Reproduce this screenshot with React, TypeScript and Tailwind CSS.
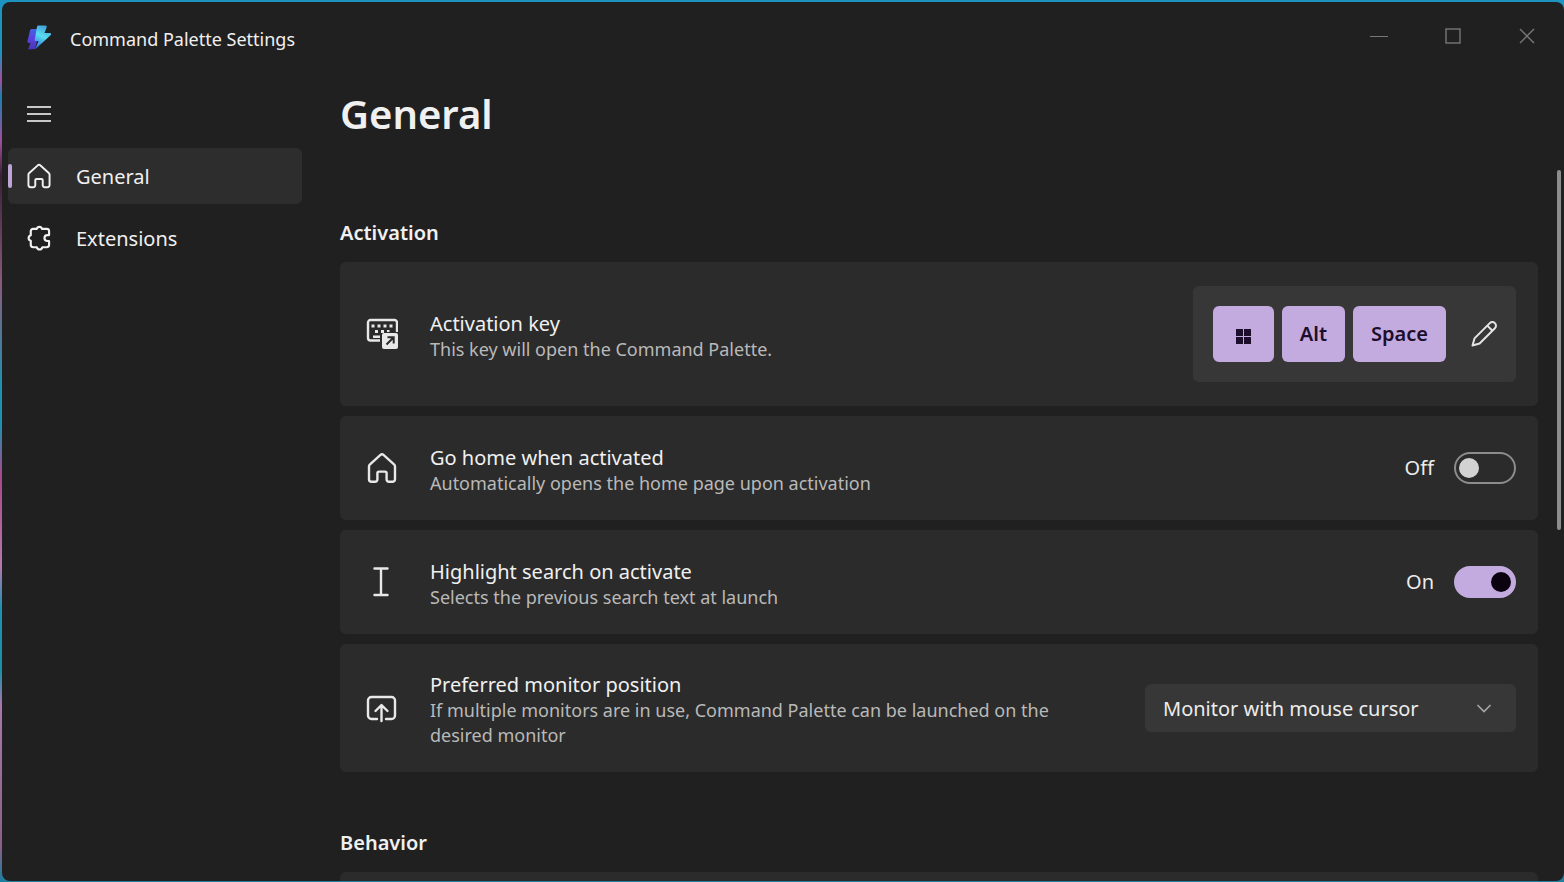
import React, { useState } from "react";

type IconProps = {
  className?: string;
};

const HomeIcon: React.FC<IconProps> = ({ className }) => (
  <svg className={className} viewBox="0 0 32 32" fill="none" stroke="currentColor" strokeWidth="2.4" strokeLinejoin="round">
    <path d="M14.5 2.9a2.3 2.3 0 0 1 3 0l10.5 9.4c.6.5 1 1.300 1 2.100v12.8a2.600 2.600 0 0 1-2.600 2.600h-3.500a2.300 2.300 0 0 1-2.300-2.300v-6.300a1.600 1.600 0 0 0-1.600-1.600h-6a1.600 1.600 0 0 0-1.600 1.600v6.300a2.300 2.300 0 0 1-2.300 2.300H5.600A2.600 2.600 0 0 1 3 27.200V14.400c0-.8.400-1.600 1-2.100z" />
  </svg>
);

const PuzzleIcon: React.FC<IconProps> = ({ className }) => (
  <svg className={className} viewBox="0 0 24 24" fill="none" stroke="currentColor" strokeWidth="2" strokeLinejoin="round">
    <path d="M10 3.6a2.4 2.4 0 0 1 4.7 0h4.400a2.200 2.200 0 0 1 2.200 2.200v3.500h-1.500a2.750 2.750 0 0 0 0 5.500h1.500v3.500a2.200 2.200 0 0 1-2.200 2.200h-4a2.600 2.600 0 0 1-5.100 0H6.600a2.200 2.200 0 0 1-2.200-2.200v-3.700a2.700 2.700 0 0 1 0-5.200V5.800a2.200 2.200 0 0 1 2.200-2.200z" />
  </svg>
);

const KeyboardIcon: React.FC<IconProps> = ({ className }) => (
  <svg className={className} viewBox="0 0 32 32" fill="none">
    <path d="M14 22.500H4.500A2.500 2.500 0 0 1 2 20V4.500A2.500 2.500 0 0 1 4.500 2h24A2.500 2.500 0 0 1 31 4.500V14" stroke="currentColor" strokeWidth="2.400" />
    <path d="M5.500 6.500h3v3h-3zM11.500 6.500h3v3h-3zM17.500 6.500h3v3h-3zM23.500 6.500h3v3h-3zM9 12h3v3H9zM15 12h3v3h-3zM21 12h2.500v2H21zM7 17.500h7v2.500H7z" fill="currentColor" />
    <rect x="16" y="15" width="16" height="16" rx="2" fill="currentColor" />
    <path d="M20.500 26.500l7-7M21.500 19.300h6.200v6.200" stroke="#2b2b2b" strokeWidth="2" />
  </svg>
);

const CursorIcon: React.FC<IconProps> = ({ className }) => (
  <svg className={className} viewBox="0 0 32 32" fill="none" stroke="currentColor" strokeWidth="2.4" strokeLinecap="round">
    <path d="M8.500 2.500h13M8.500 29h13M15 2.500V29" />
  </svg>
);

const MonitorIcon: React.FC<IconProps> = ({ className }) => (
  <svg className={className} viewBox="0 0 32 32" fill="none" stroke="currentColor" strokeWidth="2.4" strokeLinecap="round" strokeLinejoin="round">
    <path d="M11 27H5.500A3.500 3.500 0 0 1 2 23.500v-15A3.500 3.500 0 0 1 5.500 5h20A3.500 3.500 0 0 1 29 8.500v15a3.500 3.500 0 0 1-3.500 3.500H20" />
    <path d="M15.500 29V13.500M9.500 19l6-6 6 6" />
  </svg>
);

const PencilIcon: React.FC<IconProps> = ({ className }) => (
  <svg className={className} viewBox="0 0 28 28" fill="none" stroke="currentColor" strokeWidth="2" strokeLinejoin="round">
    <path d="M19.800 3.100a3.600 3.600 0 0 1 5.100 5.100L9.600 23.500 2.500 25.500l2-7.100zM17.300 5.600l5.100 5.100" />
  </svg>
);

const AppLogo: React.FC<IconProps> = ({ className }) => (
  <svg className={className} viewBox="0 0 26 28" fill="none">
    <defs>
      <linearGradient id="boltLeft" x1="8" y1="2" x2="6" y2="26" gradientUnits="userSpaceOnUse">
        <stop offset="0" stopColor="#3a6fe0" />
        <stop offset="0.5" stopColor="#5a42e0" />
        <stop offset="1" stopColor="#4a34b4" />
      </linearGradient>
      <linearGradient id="boltRight" x1="20" y1="2" x2="10" y2="24" gradientUnits="userSpaceOnUse">
        <stop offset="0" stopColor="#3f9fd8" />
        <stop offset="0.45" stopColor="#58dcf0" />
        <stop offset="1" stopColor="#2f6fe0" />
      </linearGradient>
    </defs>
    <path d="M6 5h9l-3 8-3 12-7 .5L4.500 19H3c-1.500 0-2-1-1.500-2.300L4 6.500C4.400 5.500 5 5 6 5z" fill="url(#boltLeft)" />
    <path d="M12.500 1.500h7c1 0 1.500.8 1.200 1.700L18.500 9H24c1.200 0 1.600 1.200.8 2L9 25.500l3.500-8.500H10c-1 0-1.500-.8-1.200-1.800L11 2.700c.3-.8.700-1.200 1.500-1.200z" fill="url(#boltRight)" />
  </svg>
);

type SettingCardProps = {
  icon: React.ReactNode;
  title: string;
  description: string;
  children: React.ReactNode;
};

const SettingCard: React.FC<SettingCardProps> = ({ icon, title, description, children }) => (
  <div className="flex min-h-26 items-center rounded-md bg-[#2b2b2b] py-6 pr-[22px] pl-[26px] text-[#e8e8e8]">
    {icon}
    <div className="mr-12 ml-8 flex-1 pt-1">
      <h3 className="text-[20px] leading-[26px] text-[#f0f0f0]">{title}</h3>
      <p className="text-[18px] leading-[25px] text-[#b9b9b9]">{description}</p>
    </div>
    {children}
  </div>
);

type ToggleProps = {
  label: string;
  checked: boolean;
  onChange: () => void;
};

const Toggle: React.FC<ToggleProps> = ({ label, checked, onChange }) => (
  <label className="flex items-center gap-5 text-[20px] text-[#ececec]">
    {checked ? "On" : "Off"}
    <input
      type="checkbox"
      role="switch"
      aria-label={label}
      checked={checked}
      onChange={onChange}
      className="flex h-8 w-[62px] appearance-none items-center rounded-full border-2 border-[#8c8c8c] px-[3px] before:size-5 before:rounded-full before:bg-[#d2d2d2] checked:justify-end checked:border-[#c4abdf] checked:bg-[#c4abdf] checked:before:bg-[#0b0210]"
    />
  </label>
);

const App: React.FC = () => {
  const [goHome, setGoHome] = useState(false);
  const [highlight, setHighlight] = useState(true);

  return (
    <div className="h-screen bg-[linear-gradient(180deg,#1d93c0_0%,#1d93c0_6%,#a04f9c_9%,#1d7fb0_11%,#a04f9c_16%,#3a2038_20%,#8a5a7c_32%,#1d93b0_44%,#1d93b0_48%,#a8488c_54%,#b878ac_64%,#1d93b0_69%,#1d8fa8_76%,#a878ac_80%,#8a5f86_96%,#1b7f9f_100%)] pt-[2px] pb-px pl-[2px] font-['Noto_Sans',sans-serif]">
      <div className="flex h-full flex-col overflow-hidden rounded-lg bg-[#202020] text-[#f0f0f0]">
        <header className="flex h-18 shrink-0 items-center pr-7 pl-6">
          <AppLogo className="h-7 w-[26px]" />
          <span className="ml-[18px] pt-0.5 text-[18px]">Command Palette Settings</span>
          <div className="ml-auto flex items-center gap-14 pb-1 text-[#777777]">
            <button aria-label="Minimize">
              <svg className="size-[18px]" viewBox="0 0 18 18" fill="none" stroke="currentColor">
                <path d="M0 9.500h18" />
              </svg>
            </button>
            <button aria-label="Maximize">
              <svg className="size-[18px]" viewBox="0 0 18 18" fill="none" stroke="currentColor" strokeWidth="1.400">
                <rect x="2" y="2" width="14" height="14" />
              </svg>
            </button>
            <button aria-label="Close">
              <svg className="size-[18px]" viewBox="0 0 18 18" fill="none" stroke="currentColor" strokeWidth="1.400">
                <path d="M2 2l14 14M16 2L2 16" />
              </svg>
            </button>
          </div>
        </header>

        <div className="flex min-h-0 flex-1">
          <nav className="flex w-[300px] shrink-0 flex-col gap-1.5 pt-3 pl-1.5 text-[20px]">
            <button aria-label="Toggle navigation" className="flex h-14 w-16 items-center pl-[19px] text-[#c8c8c8]">
              <svg className="size-6" viewBox="0 0 24 24" fill="none" stroke="currentColor" strokeWidth="1.800">
                <path d="M0 5h24M0 12h24M0 19h24" />
              </svg>
            </button>
            <a href="#general" className="flex h-14 items-center rounded-md bg-[#2d2d2d]">
              <span className="h-6 w-1 rounded-full bg-[#bda5d8]" />
              <HomeIcon className="ml-[14px] size-[26px]" />
              <span className="ml-6 pt-0.5">General</span>
            </a>
            <a href="#extensions" className="flex h-14 items-center rounded-md">
              <PuzzleIcon className="ml-[18px] size-[26px]" />
              <span className="ml-6 pt-0.5">Extensions</span>
            </a>
          </nav>

          <main className="min-w-0 flex-1 overflow-hidden pr-[19px] pl-[38px]">
            <h1 className="pt-3 text-[40px] leading-14 font-semibold">General</h1>

            <section className="pt-[77px]">
              <h2 className="text-[20px] leading-7 font-semibold">Activation</h2>
              <div className="mt-[15px] flex flex-col gap-2.5">
                <SettingCard
                  icon={<KeyboardIcon className="size-8" />}
                  title="Activation key"
                  description="This key will open the Command Palette."
                >
                  <div className="flex items-center gap-2 rounded-md bg-[#373737] p-5 pr-[18px] text-[20px] font-semibold text-[#1d0f2b]">
                    <kbd className="flex h-14 items-center rounded-md bg-[#c4abdf] px-[23px] pt-1 font-[inherit]">
                      <svg className="size-[15px]" viewBox="0 0 15 15" fill="currentColor">
                        <path d="M0 0h7v7H0zM8 0h7v7H8zM0 8h7v7H0zM8 8h7v7H8z" />
                      </svg>
                    </kbd>
                    <kbd className="flex h-14 items-center rounded-md bg-[#c4abdf] px-[18px] font-[inherit]">Alt</kbd>
                    <kbd className="flex h-14 items-center rounded-md bg-[#c4abdf] px-[18px] font-[inherit]">Space</kbd>
                    <button aria-label="Edit activation key" className="ml-4 text-[#e4e4e4]">
                      <PencilIcon className="size-7" />
                    </button>
                  </div>
                </SettingCard>

                <SettingCard
                  icon={<HomeIcon className="size-8" />}
                  title="Go home when activated"
                  description="Automatically opens the home page upon activation"
                >
                  <Toggle label="Go home when activated" checked={goHome} onChange={() => setGoHome(!goHome)} />
                </SettingCard>

                <SettingCard
                  icon={<CursorIcon className="size-8" />}
                  title="Highlight search on activate"
                  description="Selects the previous search text at launch"
                >
                  <Toggle label="Highlight search on activate" checked={highlight} onChange={() => setHighlight(!highlight)} />
                </SettingCard>

                <SettingCard
                  icon={<MonitorIcon className="size-8" />}
                  title="Preferred monitor position"
                  description="If multiple monitors are in use, Command Palette can be launched on the desired monitor"
                >
                  <div className="relative">
                    <select
                      aria-label="Preferred monitor position"
                      className="h-12 w-[371px] appearance-none rounded-md bg-[#373737] px-[18px] pt-0.5 text-[20px] text-[#ececec]"
                    >
                      <option>Monitor with mouse cursor</option>
                    </select>
                    <svg className="pointer-events-none absolute top-4 right-6 size-4 text-[#a8a8a8]" viewBox="0 0 16 16" fill="none" stroke="currentColor" strokeWidth="1.600">
                      <path d="M1.500 5l6.500 6.500L14.500 5" />
                    </svg>
                  </div>
                </SettingCard>
              </div>
            </section>

            <section className="pt-[57px]">
              <h2 className="text-[20px] leading-7 font-semibold">Behavior</h2>
              <div className="mt-[15px] h-26 rounded-md bg-[#2b2b2b]" />
            </section>
          </main>

          <div className="mr-[3px] h-full shrink-0 pt-24">
            <div className="h-[360px] w-1 rounded-full bg-[#8d8d8d]" />
          </div>
        </div>
      </div>
    </div>
  );
};

export default App;
